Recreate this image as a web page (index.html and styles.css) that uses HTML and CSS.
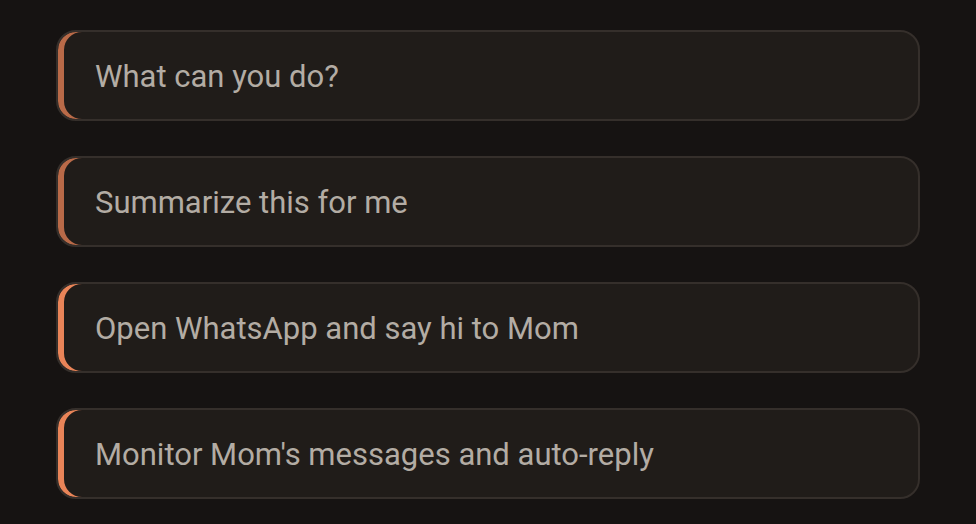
FILE: index.html
```html
<!DOCTYPE html>
<html>
<head>
<meta charset="utf-8">
<link rel="stylesheet" href="styles.css">
</head>
<body>
<div class="list">
  <div class="chip chip-dim">What can you do?</div>
  <div class="chip chip-dim">Summarize this for me</div>
  <div class="chip chip-bright">Open WhatsApp and say hi to Mom</div>
  <div class="chip chip-bright">Monitor Mom's messages and auto-reply</div>
</div>
</body>
</html>
```
FILE: styles.css
```css
html, body {
  margin: 0;
  padding: 0;
  background: #161312;
}
body {
  font-family: Roboto, "Noto Sans", sans-serif;
}
.list {
  display: flex;
  flex-direction: column;
  gap: 35px;
  padding: 30px 56px 0 56px;
}
.chip {
  height: 91px;
  box-sizing: border-box;
  display: flex;
  align-items: center;
  padding-left: 37px;
  padding-top: 1px;
  background: #201c19;
  border: 2px solid #352f2b;
  border-radius: 20px;
  box-shadow: inset 6px 0 0 #b96a48;
  color: #b3aca4;
  font-size: 31px;
}
.chip-bright {
  box-shadow: inset 6px 0 0 #e98458;
}
```
